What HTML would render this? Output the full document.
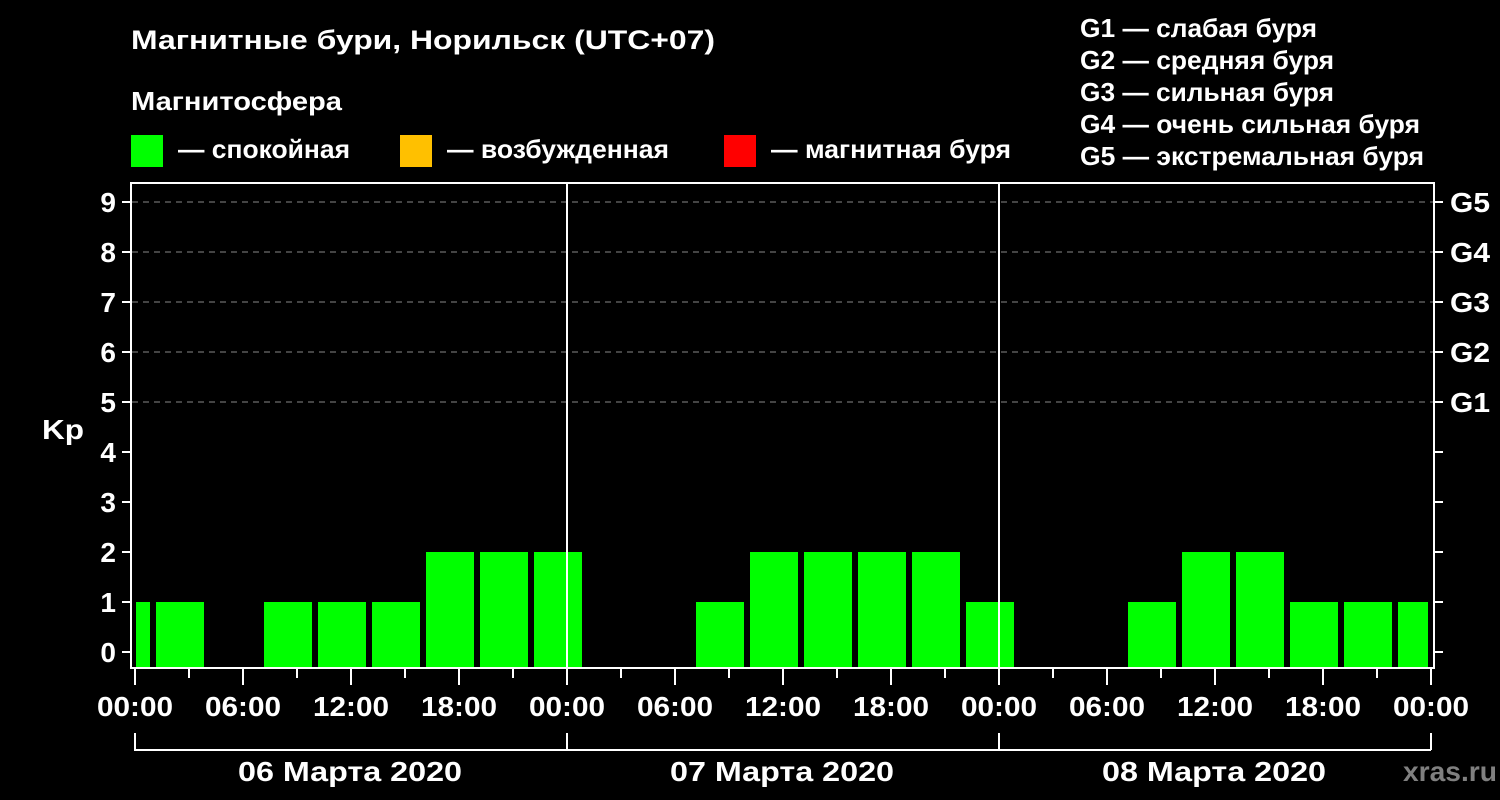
<!DOCTYPE html>
<html><head><meta charset="utf-8"><style>
body{margin:0;background:#000;width:1500px;height:800px;overflow:hidden;font-family:"Liberation Sans",sans-serif;font-weight:bold;color:#fff}
</style></head><body>
<svg width="1500" height="800" xmlns="http://www.w3.org/2000/svg" style="position:absolute;left:0;top:0" font-family="Liberation Sans, sans-serif" font-weight="bold" fill="#fff">
<rect width="1500" height="800" fill="#000"/>
<g lengthAdjust="spacingAndGlyphs">
<text x="131" y="49" font-size="27" textLength="584" lengthAdjust="spacingAndGlyphs">Магнитные бури, Норильск (UTC+07)</text>
<text x="131" y="110" font-size="26" textLength="211" lengthAdjust="spacingAndGlyphs">Магнитосфера</text>
<rect x="131" y="135" width="32" height="32" fill="#00ff00"/>
<text x="178" y="158" font-size="26" textLength="172" lengthAdjust="spacingAndGlyphs">— спокойная</text>
<rect x="400" y="135" width="32" height="32" fill="#ffc000"/>
<text x="447" y="158" font-size="26" textLength="222" lengthAdjust="spacingAndGlyphs">— возбужденная</text>
<rect x="724" y="135" width="32" height="32" fill="#ff0000"/>
<text x="771" y="158" font-size="26" textLength="240" lengthAdjust="spacingAndGlyphs">— магнитная буря</text>
<g font-size="26">
<text x="1080" y="37" textLength="237" lengthAdjust="spacingAndGlyphs">G1 — слабая буря</text>
<text x="1080" y="69" textLength="254" lengthAdjust="spacingAndGlyphs">G2 — средняя буря</text>
<text x="1080" y="101" textLength="254" lengthAdjust="spacingAndGlyphs">G3 — сильная буря</text>
<text x="1080" y="133" textLength="340" lengthAdjust="spacingAndGlyphs">G4 — очень сильная буря</text>
<text x="1080" y="165" textLength="344" lengthAdjust="spacingAndGlyphs">G5 — экстремальная буря</text>
</g>
</g>
<g stroke="#888" stroke-width="1" stroke-dasharray="6,5">
<line x1="132" y1="202" x2="1433" y2="202"/><line x1="132" y1="252" x2="1433" y2="252"/>
<line x1="132" y1="302" x2="1433" y2="302"/><line x1="132" y1="352" x2="1433" y2="352"/>
<line x1="132" y1="402" x2="1433" y2="402"/>
</g>
<g fill="#00ff00">
<rect x="136" y="602" width="14" height="66"/>
<rect x="156" y="602" width="48" height="66"/>
<rect x="264" y="602" width="48" height="66"/>
<rect x="318" y="602" width="48" height="66"/>
<rect x="372" y="602" width="48" height="66"/>
<rect x="426" y="552" width="48" height="116"/>
<rect x="480" y="552" width="48" height="116"/>
<rect x="534" y="552" width="48" height="116"/>
<rect x="696" y="602" width="48" height="66"/>
<rect x="750" y="552" width="48" height="116"/>
<rect x="804" y="552" width="48" height="116"/>
<rect x="858" y="552" width="48" height="116"/>
<rect x="912" y="552" width="48" height="116"/>
<rect x="966" y="602" width="48" height="66"/>
<rect x="1128" y="602" width="48" height="66"/>
<rect x="1182" y="552" width="48" height="116"/>
<rect x="1236" y="552" width="48" height="116"/>
<rect x="1290" y="602" width="48" height="66"/>
<rect x="1344" y="602" width="48" height="66"/>
<rect x="1398" y="602" width="30" height="66"/>
</g>
<g stroke="#fff" stroke-width="2" fill="none">
<rect x="131" y="183" width="1303" height="485"/>
<line x1="567" y1="183" x2="567" y2="668"/><line x1="999" y1="183" x2="999" y2="668"/>
<path d="M122 202h9M122 252h9M122 302h9M122 352h9M122 402h9M122 452h9M122 502h9M122 552h9M122 602h9M122 652h9"/>
<path d="M1434 202h9M1434 252h9M1434 302h9M1434 352h9M1434 402h9M1434 452h9M1434 502h9M1434 552h9M1434 602h9M1434 652h9"/>
<path d="M135 668v17M243 668v17M351 668v17M459 668v17M567 668v17M675 668v17M783 668v17M891 668v17M999 668v17M1107 668v17M1215 668v17M1323 668v17M1431 668v17"/>
<path d="M189 668v10M297 668v10M405 668v10M513 668v10M621 668v10M729 668v10M837 668v10M945 668v10M1053 668v10M1161 668v10M1269 668v10M1377 668v10"/>
<path d="M135 733v17H1431M567 733v17M999 733v17M1431 733v17"/>
</g>
<g font-size="28" text-anchor="end">
<text x="116" y="212">9</text><text x="116" y="262">8</text><text x="116" y="312">7</text><text x="116" y="362">6</text><text x="116" y="412">5</text>
<text x="116" y="462">4</text><text x="116" y="512">3</text><text x="116" y="562">2</text><text x="116" y="612">1</text><text x="116" y="662">0</text>
</g>
<text x="42" y="439" font-size="28" textLength="42" lengthAdjust="spacingAndGlyphs">Kp</text>
<g font-size="28">
<text x="1450" y="212" textLength="40" lengthAdjust="spacingAndGlyphs">G5</text><text x="1450" y="262" textLength="40" lengthAdjust="spacingAndGlyphs">G4</text><text x="1450" y="312" textLength="40" lengthAdjust="spacingAndGlyphs">G3</text><text x="1450" y="362" textLength="40" lengthAdjust="spacingAndGlyphs">G2</text><text x="1450" y="412" textLength="40" lengthAdjust="spacingAndGlyphs">G1</text>
</g>
<g font-size="28">
<text x="97" y="716" textLength="76" lengthAdjust="spacingAndGlyphs">00:00</text>
<text x="205" y="716" textLength="76" lengthAdjust="spacingAndGlyphs">06:00</text>
<text x="313" y="716" textLength="76" lengthAdjust="spacingAndGlyphs">12:00</text>
<text x="421" y="716" textLength="76" lengthAdjust="spacingAndGlyphs">18:00</text>
<text x="529" y="716" textLength="76" lengthAdjust="spacingAndGlyphs">00:00</text>
<text x="637" y="716" textLength="76" lengthAdjust="spacingAndGlyphs">06:00</text>
<text x="745" y="716" textLength="76" lengthAdjust="spacingAndGlyphs">12:00</text>
<text x="853" y="716" textLength="76" lengthAdjust="spacingAndGlyphs">18:00</text>
<text x="961" y="716" textLength="76" lengthAdjust="spacingAndGlyphs">00:00</text>
<text x="1069" y="716" textLength="76" lengthAdjust="spacingAndGlyphs">06:00</text>
<text x="1177" y="716" textLength="76" lengthAdjust="spacingAndGlyphs">12:00</text>
<text x="1285" y="716" textLength="76" lengthAdjust="spacingAndGlyphs">18:00</text>
<text x="1393" y="716" textLength="76" lengthAdjust="spacingAndGlyphs">00:00</text>
<text x="238" y="781" textLength="224" lengthAdjust="spacingAndGlyphs">06 Марта 2020</text>
<text x="670" y="781" textLength="224" lengthAdjust="spacingAndGlyphs">07 Марта 2020</text>
<text x="1102" y="781" textLength="224" lengthAdjust="spacingAndGlyphs">08 Марта 2020</text>
</g>
<text x="1403" y="781" font-size="28" fill="#808080" textLength="94" lengthAdjust="spacingAndGlyphs">xras.ru</text>
</svg>
</body></html>
